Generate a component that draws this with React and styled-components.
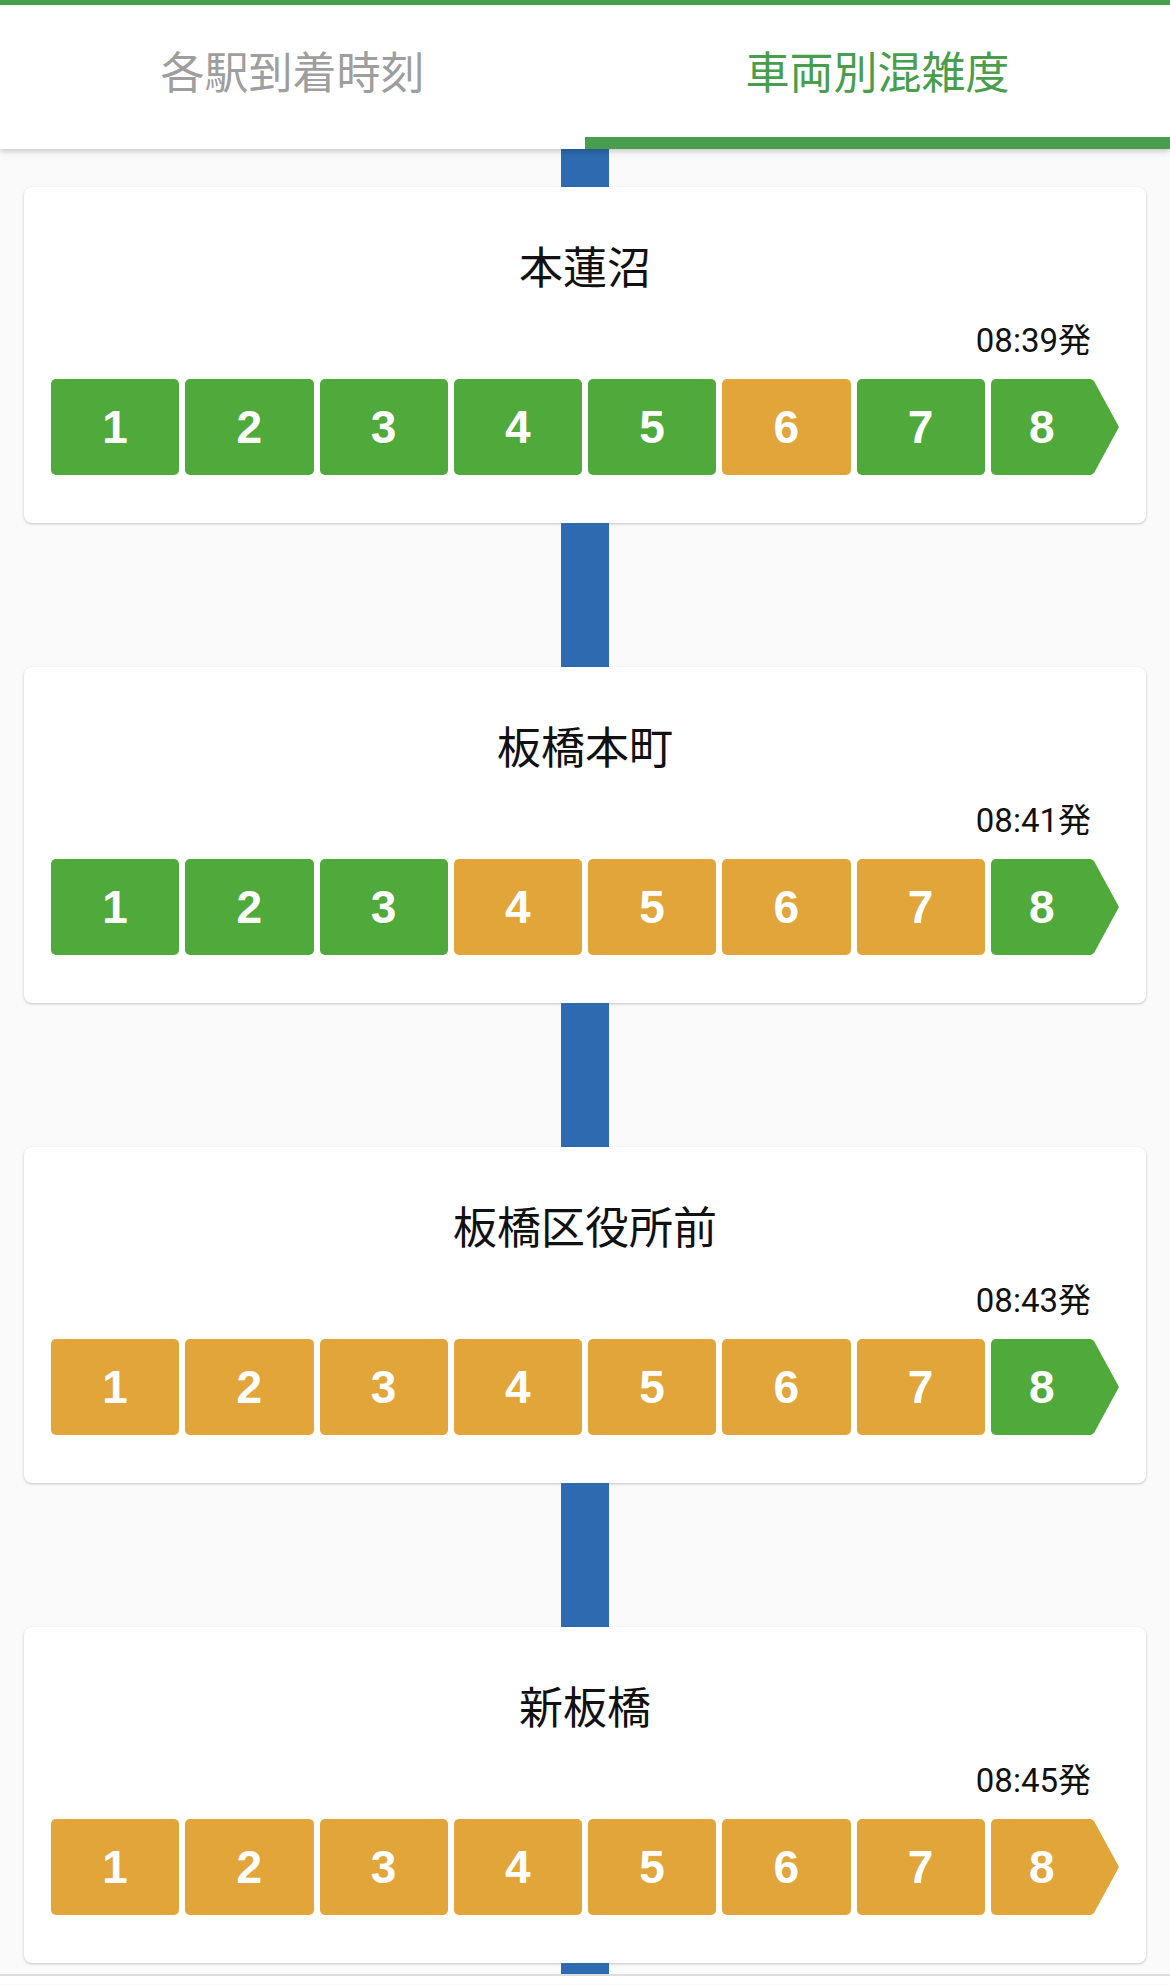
import React from 'react'
import styled, { createGlobalStyle } from 'styled-components'

const GlobalStyle = createGlobalStyle`
    body {
        margin: 0;
        background: #fafafa;
        font-family: Roboto, "Noto Sans CJK JP", sans-serif;
    }
`

const Header = styled.header`
    position: relative;
    z-index: 2;
    display: flex;
    height: 144px;
    border-top: 5px solid #489e4c;
    background: #fff;
    box-shadow: 0 2px 6px rgba(0, 0, 0, 0.22);
`

const Tab = styled.div`
    flex: 1;
    display: flex;
    align-items: center;
    justify-content: center;
    box-sizing: border-box;
    padding-bottom: 2px;
    border-bottom: 12px solid ${p => (p.$active ? '#489e4c' : 'transparent')};
    font-size: 44px;
    color: ${p => (p.$active ? '#489e4c' : '#9e9e9e')};
`

const List = styled.main`
    display: flex;
    flex-direction: column;
    align-items: center;
    padding: 0 24px;
`

const Line = styled.div`
    width: 48px;
    height: ${p => p.$h}px;
    background: #2d6aaf;
`

const Card = styled.section`
    width: 100%;
    box-sizing: border-box;
    padding: 56px 27px 48px;
    background: #fff;
    border-radius: 8px;
    box-shadow: 0 1px 3px rgba(0, 0, 0, 0.22);
`

const Station = styled.h2`
    margin: 0;
    height: 52px;
    line-height: 52px;
    text-align: center;
    font-size: 44px;
    font-weight: 400;
    color: #111;
`

const Depart = styled.div`
    margin-top: 26px;
    padding-right: 28px;
    height: 40px;
    line-height: 40px;
    text-align: right;
    font-size: 33px;
    color: #111;
`

const Train = styled.div`
    display: grid;
    grid-template-columns: repeat(8, 1fr);
    gap: 6px;
    margin-top: 18px;
`

const Car = styled.div`
    display: flex;
    align-items: center;
    justify-content: center;
    height: 96px;
    padding-right: ${p => (p.$head ? '26px' : '0')};
    border-radius: 5px;
    background: ${p => (p.$busy ? '#e1a539' : '#4fa93b')};
    clip-path: ${p =>
        p.$head
            ? 'polygon(0 0, calc(100% - 28px) 0, calc(100% - 25px) 2px, 100% 50%, calc(100% - 25px) calc(100% - 2px), calc(100% - 28px) 100%, 0 100%)'
            : 'none'};
    color: #fff;
    font-family: "Liberation Sans", Arial, sans-serif;
    font-size: 46px;
    font-weight: 700;
`

const Footer = styled.footer`
    height: 8px;
    border-top: 2px solid #dcdcdc;
    background: #fff;
`

// G = 空き, O = やや混雑
const stations = [
    { name: '本蓮沼', time: '08:39', cars: 'GGGGGOGG' },
    { name: '板橋本町', time: '08:41', cars: 'GGGOOOOG' },
    { name: '板橋区役所前', time: '08:43', cars: 'OOOOOOOG' },
    { name: '新板橋', time: '08:45', cars: 'OOOOOOOO' },
]

const App = () => {
  return (
    <>
      <GlobalStyle />
      <Header>
        <Tab>各駅到着時刻</Tab>
        <Tab $active>車両別混雑度</Tab>
      </Header>
      <List>
        {stations.map((s, i) => (
          <React.Fragment key={s.name}>
            <Line $h={i === 0 ? 38 : 144} />
            <Card>
              <Station>{s.name}</Station>
              <Depart>{s.time}発</Depart>
              <Train>
                {s.cars.split('').map((c, n) => (
                  <Car key={n} $busy={c === 'O'} $head={n === 7}>{n + 1}</Car>
                ))}
              </Train>
            </Card>
          </React.Fragment>
        ))}
        <Line $h={11} />
      </List>
      <Footer />
    </>
  )
}

export default App
